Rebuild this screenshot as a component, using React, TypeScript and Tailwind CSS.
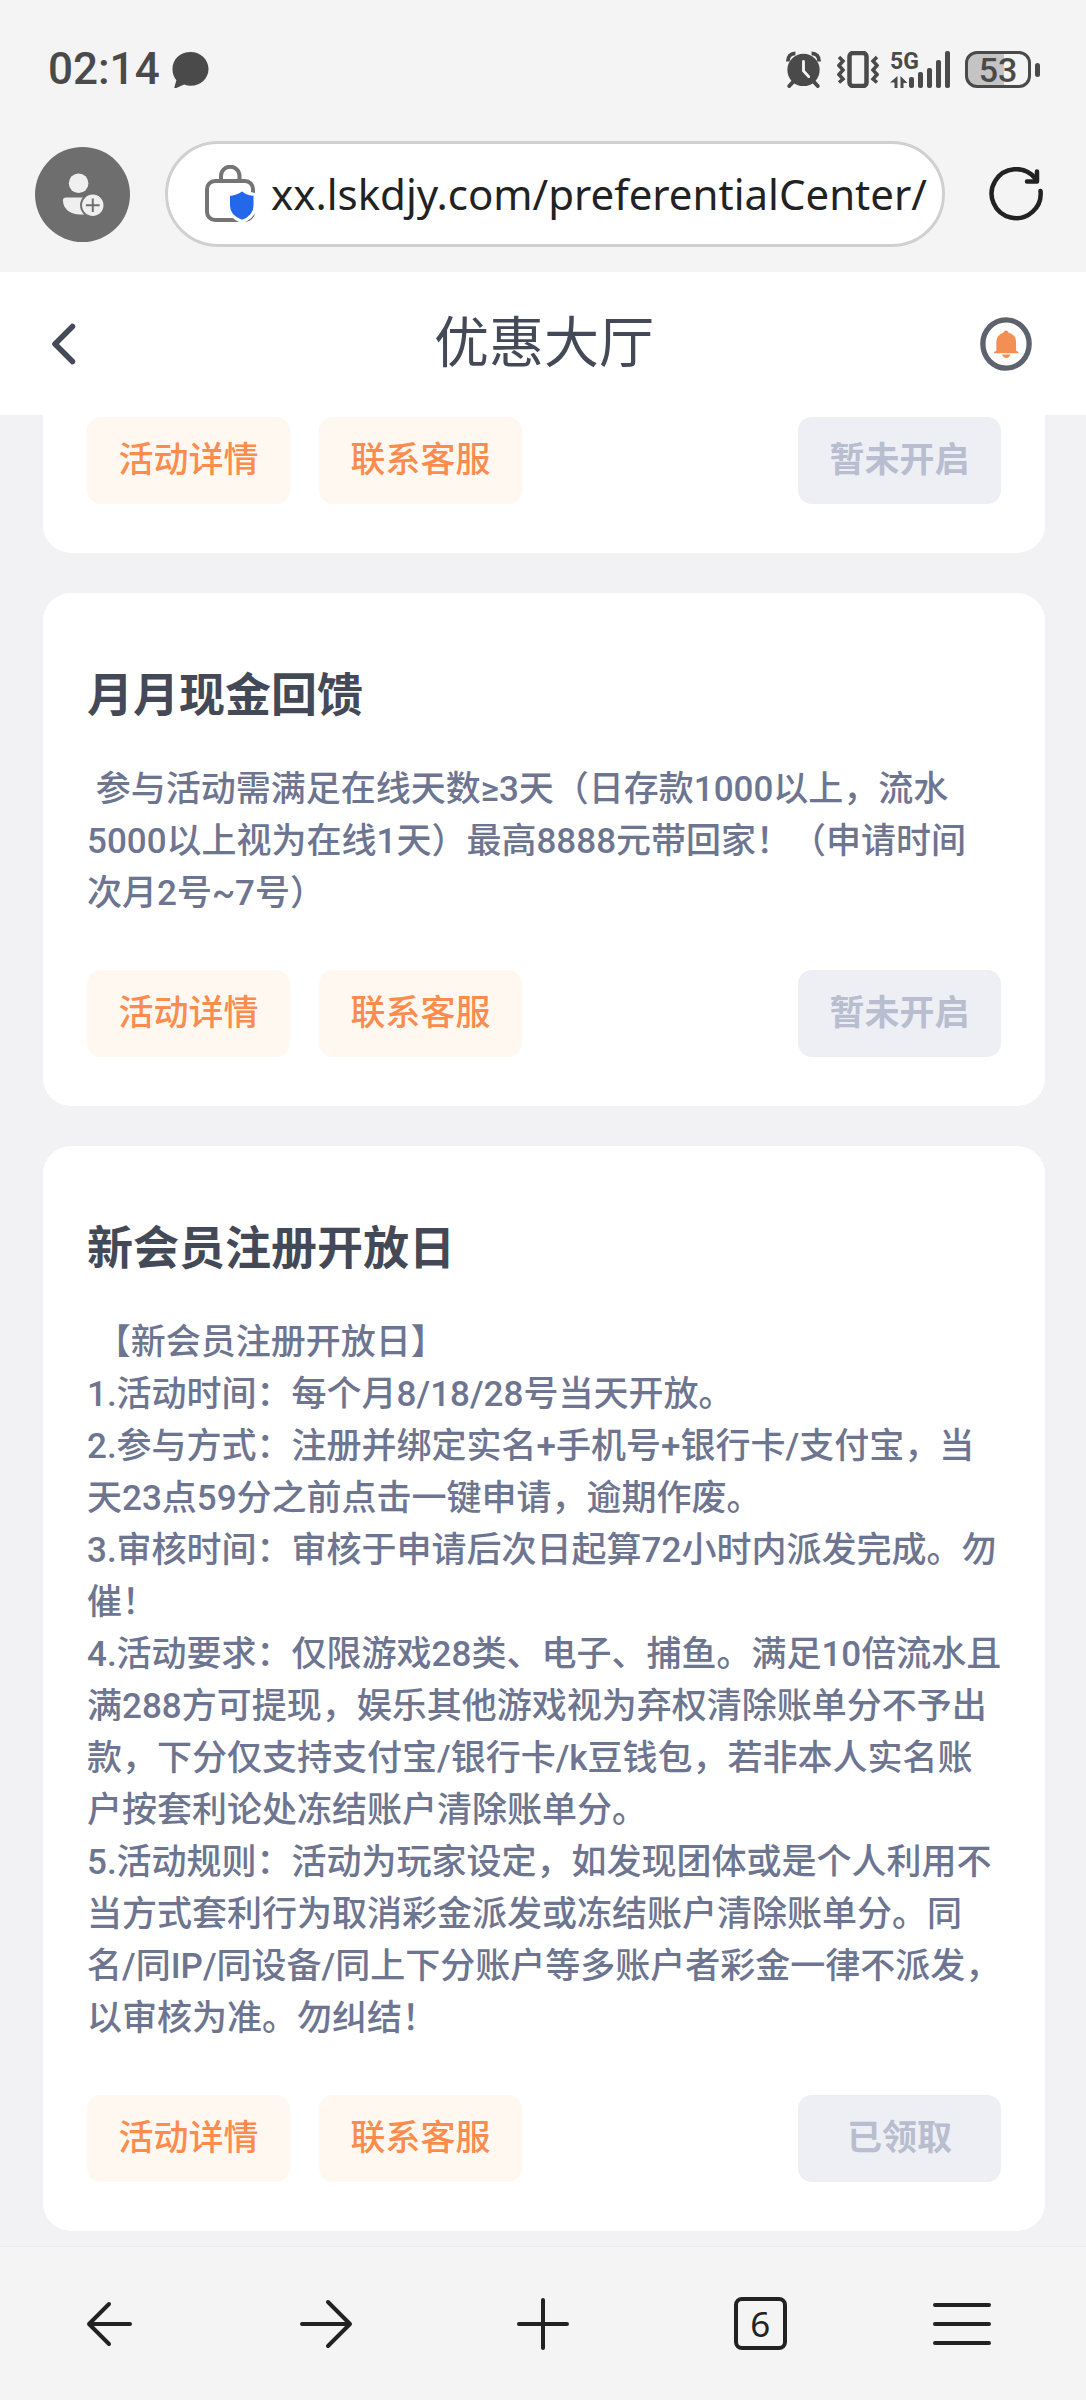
import React from "react";

type Promo = {
  title?: string;
  body?: string;
  status: string;
};

const promos: Promo[] = [
  { status: "暂未开启" },
  {
    title: "月月现金回馈",
    body: "\u00a0参与活动需满足在线天数≥3天（日存款1000以上，流水5000以上视为在线1天）最高8888元带回家！（申请时间\n次月2号~7号）",
    status: "暂未开启",
  },
  {
    title: "新会员注册开放日",
    body: [
      "\u00a0【新会员注册开放日】",
      "1.活动时间：每个月8/18/28号当天开放。",
      "2.参与方式：注册并绑定实名+手机号+银行卡/支付宝，当天23点59分之前点击一键申请，逾期作废。",
      "3.审核时间：审核于申请后次日起算72小时内派发完成。勿催！",
      "4.活动要求：仅限游戏28类、电子、捕鱼。满足10倍流水且满288方可提现，娱乐其他游戏视为弃权清除账单分不予出款，下分仅支持支付宝/银行卡/k豆钱包，若非本人实名账户按套利论处冻结账户清除账单分。",
      "5.活动规则：活动为玩家设定，如发现团体或是个人利用不当方式套利行为取消彩金派发或冻结账户清除账单分。同名/同IP/同设备/同上下分账户等多账户者彩金一律不派发，以审核为准。勿纠结！",
    ].join("\n"),
    status: "已领取",
  },
];

const StatusBar = () => (
  <div className="flex items-center justify-between pt-[51px] pl-12 pr-[46px] text-[#4a4a4a]">
    <div className="flex items-center gap-3 h-[37px]">
      <span className="font-['Roboto',sans-serif] font-medium text-[44px] leading-[37px]">
        02:14
      </span>
      <svg width="37" height="37" viewBox="0 0 38 38" fill="currentColor">
        <path d="M19 1C8.500 1 0.500 8.500 0.500 18.500c0 5 1.500 8.500 4 11.500L2.500 37c-.3 1 .5 1.600 1.400 1.200l8.600-3.700c2 .8 4.300 1.200 6.500 1.200 10.500 0 18.500-7.500 18.500-17.200S29.500 1 19 1z" />
      </svg>
    </div>
    <div className="flex items-center h-[37px]">
      <svg width="37" height="37" viewBox="0 0 37 39" fill="none" stroke="currentColor">
        <circle cx="18.500" cy="20" r="17" fill="currentColor" stroke="none" />
        <path d="M2 11C2 6 5 2.500 10 2.500M35 11c0-5-3-8.500-8-8.500" strokeWidth="4" />
        <path d="m8 32-4.500 5M29 32l4.500 5" strokeWidth="4" strokeLinecap="round" />
        <path d="M18.500 11v10l5.500 6" stroke="#f4f4f4" strokeWidth="3" strokeLinecap="round" />
      </svg>
      <svg className="ml-[15px]" width="42" height="37" viewBox="0 0 42 37" fill="none" stroke="currentColor">
        <rect x="12.500" y="2" width="17" height="33" rx="3.500" strokeWidth="4.500" />
        <path d="m2 6 4 4-4 4.500 4 4.500-4 4.500L6 28l-4 3.500M40 6l-4 4 4 4.500-4 4.500 4 4.500-4 4.500 4 3.500" strokeWidth="3.500" />
      </svg>
      <svg className="ml-[11px] overflow-visible" width="62" height="37" viewBox="0 0 62 37" fill="currentColor">
        <text x="0" y="18" fontFamily="Roboto, sans-serif" fontWeight="700" fontSize="23">5G</text>
        <path d="M7.500 25v12H4.500v-5.500H0zM10.500 25l7 7h-4v5h-3z" />
        <rect x="19" y="26" width="5" height="11" rx="2" />
        <rect x="28" y="21" width="5" height="16" rx="2" />
        <rect x="37" y="17" width="5" height="20" rx="2" />
        <rect x="46" y="9" width="5" height="28" rx="2" />
        <rect x="55" y="0" width="5" height="37" rx="2" />
      </svg>
      <div className="ml-[13px] flex items-center gap-1">
        <div className="flex h-[37px] w-[66px] items-center justify-center rounded-xl border-[3px] border-[#4a4a4a] bg-linear-to-r from-[#c4c4c4] from-60% to-[#f4f4f4] to-60% font-['Roboto',sans-serif] text-[34px] leading-none font-medium">
          53
        </div>
        <div className="h-3.5 w-[5px] rounded-sm bg-[#4a4a4a]" />
      </div>
    </div>
  </div>
);

const AddressBar = () => (
  <div className="flex items-center pt-[53px] pb-[25px] pl-[35px] pr-[43px]">
    <button aria-label="账户" className="flex h-[95px] w-[95px] shrink-0 items-center justify-center rounded-full bg-[#6e6e6e]">
      <svg width="42" height="43" viewBox="0 0 42 44" fill="#efefef">
        <circle cx="16.500" cy="10.500" r="10" />
        <path d="M3.500 25H25v17.500h-7C8 42.500.5 37 .5 28c0-2 1-3 3-3z" />
        <circle cx="31" cy="33" r="12" stroke="#6e6e6e" strokeWidth="2" />
        <path d="M31 26v14M24 33h14" stroke="#6e6e6e" strokeWidth="2" />
      </svg>
    </button>
    <label className="ml-[35px] flex h-[106px] min-w-0 flex-1 items-center rounded-full border-[3px] border-[#d0d0d0] bg-white pl-[37px] pr-3">
      <svg className="shrink-0" width="51" height="58" viewBox="0 0 51 58" fill="none">
        <path d="M16 16v-5a9 9 0 0 1 18.500 0v5" stroke="#757575" strokeWidth="4" />
        <rect x="2" y="16" width="46" height="39" rx="8" stroke="#757575" strokeWidth="4" />
        <path
          d="M37 24.500c3.500 3 7.500 4.500 13 5V41c0 8-5 12.500-13 15.500-8-3-13.500-7.500-13.500-15.500V29.500c5.500-.5 10-2 13.500-5z"
          fill="#2368ea"
          stroke="#fff"
          strokeWidth="3"
        />
      </svg>
      <input
        aria-label="网址"
        defaultValue="xx.lskdjy.com/preferentialCenter/"
        className="ml-[15px] min-w-0 flex-1 bg-transparent font-['Noto_Sans',sans-serif] text-[42px] leading-[58px] text-[#222] outline-none"
      />
    </label>
    <button aria-label="刷新" className="ml-11">
      <svg width="54" height="54" viewBox="0 0 54 54" fill="none" stroke="#222" strokeWidth="4.500" strokeLinecap="round" strokeLinejoin="round">
        <path d="M51.500 24a24.500 24.500 0 1 1-5.500-13" />
        <path d="M48 4.500V14.500H38" />
      </svg>
    </button>
  </div>
);

const PageHeader = () => (
  <header className="flex h-[143px] items-center justify-between bg-white pl-[51px] pr-[53px]">
    <button aria-label="返回" className="w-[58px]">
      <svg width="26" height="42" viewBox="0 0 26 42" fill="none" stroke="#444957" strokeWidth="5.500" strokeLinecap="round" strokeLinejoin="round">
        <path d="M21.500 3.500 4 21l17.500 17.500" />
      </svg>
    </button>
    <h1 className="text-[55px] leading-none text-[#444957]">优惠大厅</h1>
    <button aria-label="通知">
      <svg width="54" height="54" viewBox="0 0 54 56">
        <ellipse cx="27" cy="28" rx="24" ry="25" fill="none" stroke="#5e626d" strokeWidth="5.500" />
        <path d="M27 14c1.500 0 2 1 2.500 2 5 1.500 8 5 8 10v9c1.500.5 2.500 1.300 2.500 2.500H14.500c0-1.200 1-2 2.500-2.500v-9c0-5 3-8.500 7.500-10 .5-1 1-2 2.500-2zM23 39h8.500c-.5 2.300-2 3.500-4.200 3.500S23.500 41.300 23 39z" fill="#f18f54" />
      </svg>
    </button>
  </header>
);

const PromoCard = ({ title, body, status }: Promo) => (
  <section
    className={`bg-white px-11 pb-[49px] ${title ? "rounded-[28px] pt-[73px]" : "rounded-b-[28px] pt-0.5"}`}
  >
    {title && (
      <h2 className="text-[46px] leading-[58px] font-bold text-[#444957]">{title}</h2>
    )}
    {body && (
      <p className="mt-10 -mr-1 mb-[50px] text-[35px] leading-[52px] font-medium whitespace-pre-line text-[#6d7590]">
        {body}
      </p>
    )}
    <div className="flex gap-[29px] text-[35px] leading-none">
      <button className="h-[87px] w-[203px] rounded-[14px] bg-[#fef8f1] font-medium text-[#fb8c4e]">
        活动详情
      </button>
      <button className="h-[87px] w-[203px] rounded-[14px] bg-[#fef8f1] font-medium text-[#fb8c4e]">
        联系客服
      </button>
      <button disabled className="ml-auto h-[87px] w-[203px] rounded-[14px] bg-[#eeeff4] font-bold text-[#b9bdd0]">
        {status}
      </button>
    </div>
  </section>
);

const BottomNav = () => (
  <nav className="grid h-[154px] grid-cols-5 border-t border-[#ececee] bg-[#f4f4f4] text-[#222]">
    <button aria-label="后退" className="flex items-center justify-center">
      <svg width="46" height="46" viewBox="0 0 46 46" fill="none" stroke="currentColor" strokeWidth="4" strokeLinecap="round" strokeLinejoin="round">
        <path d="M23 3 3 23l20 20M3 23h41" />
      </svg>
    </button>
    <button aria-label="前进" className="flex items-center justify-center">
      <svg width="54" height="50" viewBox="0 0 54 50" fill="none" stroke="currentColor" strokeWidth="4" strokeLinecap="round" strokeLinejoin="round">
        <path d="m29 3 22 22-22 22M51 25H3" />
      </svg>
    </button>
    <button aria-label="新标签页" className="flex items-center justify-center">
      <svg width="54" height="54" viewBox="0 0 54 54" fill="none" stroke="currentColor" strokeWidth="4" strokeLinecap="round">
        <path d="M27 3v48M3 27h48" />
      </svg>
    </button>
    <button aria-label="标签页" className="flex items-center justify-center">
      <span className="flex h-[53px] w-[53px] items-center justify-center rounded-lg border-4 border-[#222] font-['Noto_Sans',sans-serif] text-[35px] leading-none">
        6
      </span>
    </button>
    <button aria-label="菜单" className="flex items-center justify-center pr-[30px]">
      <svg width="60" height="46" viewBox="0 0 60 46" stroke="currentColor" strokeWidth="4" strokeLinecap="round">
        <path d="M3 4h54M3 23h54M3 42h54" />
      </svg>
    </button>
  </nav>
);

const App = () => {
  return (
    <div className="flex min-h-screen flex-col bg-[#f2f2f4] font-['Roboto','Noto_Sans_CJK_SC',sans-serif]">
      <div className="bg-[#f4f4f4]">
        <StatusBar />
        <AddressBar />
      </div>
      <PageHeader />
      <main className="flex flex-1 flex-col gap-10 pl-[43px] pr-[41px]">
        {promos.map((promo, index) => (
          <PromoCard key={index} {...promo} />
        ))}
      </main>
      <BottomNav />
    </div>
  );
};

export default App;
